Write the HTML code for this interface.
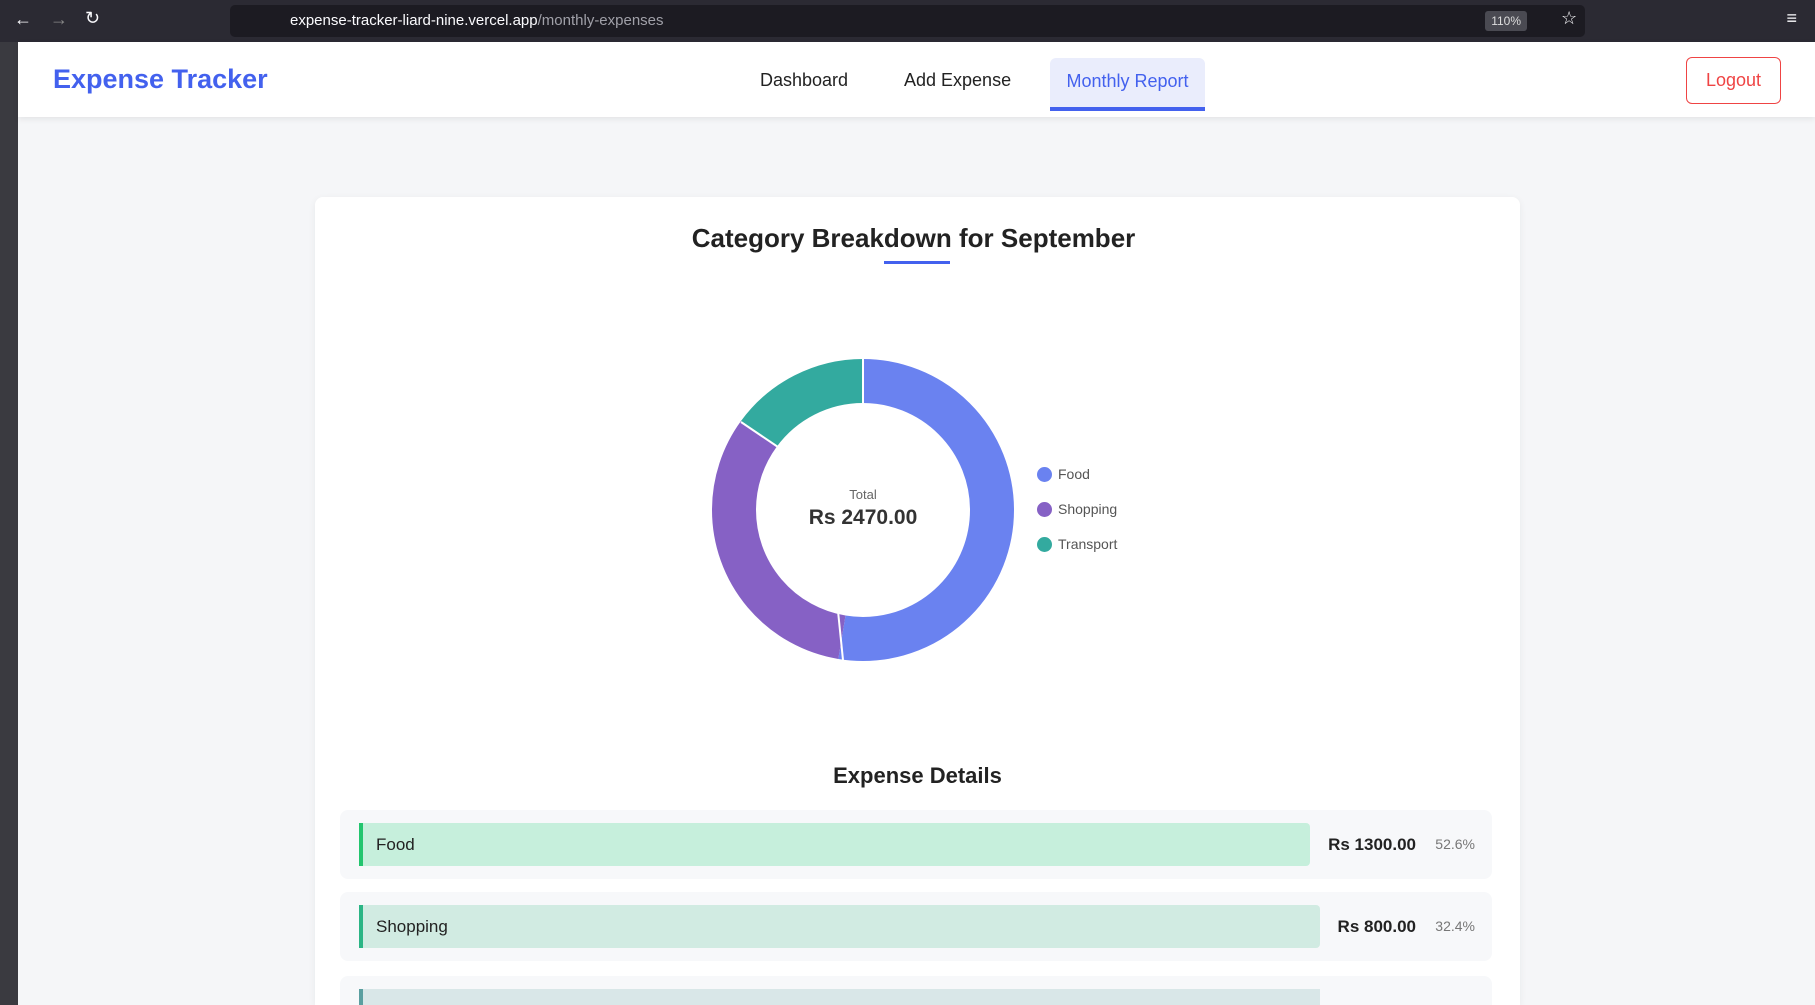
<!DOCTYPE html>
<html style="width:1815px;height:1005px;overflow:hidden"><head><meta charset="utf-8"><style>
*{margin:0;padding:0;box-sizing:border-box}
body{width:1815px;height:1005px;overflow:hidden;font-family:"Liberation Sans",sans-serif;background:#f5f6f8;position:relative}
.tb{position:absolute;left:0;top:0;width:1815px;height:42px;background:#2b2a33}
.url{position:absolute;left:230px;top:5px;width:1355px;height:32px;background:#1c1b22;border-radius:5px;color:#fbfbfe;font-size:15px;line-height:32px;padding-left:60px}
.url span{color:#a0a0a8}
.zoom{position:absolute;right:58px;top:6px;background:#4a4a52;color:#ddd;font-size:12px;padding:3px 6px;border-radius:3px;line-height:14px}
.side{position:absolute;left:0;top:42px;width:18px;height:963px;background:#3a3a40}
.hdr{position:absolute;left:18px;top:42px;width:1797px;height:75px;background:#fff;box-shadow:0 2px 6px rgba(0,0,0,.08)}
.logo{position:absolute;left:35px;top:22px;font-size:27px;font-weight:bold;color:#4361ee}
.nav{position:absolute;top:28px;font-size:18px;color:#222}
.act{position:absolute;left:1032px;top:16px;width:155px;height:53px;background:#eaedfc;border-radius:6px 6px 0 0;color:#4361ee;font-size:18px;text-align:center;line-height:46px;border-bottom:4px solid #4361ee}
.lo{position:absolute;left:1668px;top:15px;width:95px;height:47px;border:1px solid #ef4444;border-radius:6px;color:#ef4444;font-size:18px;text-align:center;line-height:45px}
.card{position:absolute;left:315px;top:197px;width:1205px;height:808px;background:#fff;border-radius:8px 8px 0 0;box-shadow:0 2px 8px rgba(0,0,0,.06)}
h1{position:absolute;left:0;width:100%;top:223px;text-align:center;font-size:26px;color:#222;padding-left:12px}
.ul{position:absolute;left:884px;top:261px;width:66px;height:3px;background:#4361ee}
.leg{position:absolute;left:1037px;font-size:14px;color:#555}
.leg i{display:inline-block;width:15px;height:15px;border-radius:50%;vertical-align:-3px;margin-right:6px}
h2{position:absolute;left:0;width:100%;top:763px;text-align:center;font-size:22px;color:#222;padding-left:20px}
.row{position:absolute;left:340px;width:1152px;height:69px;background:#f7f8fa;border-radius:8px}
.bar{position:absolute;left:19px;top:13px;height:43px;border-radius:0 4px 4px 0;font-size:17px;color:#222;line-height:43px;padding-left:13px}
.amt{position:absolute;top:0;line-height:69px;font-size:17px;font-weight:bold;color:#222}
.pct{position:absolute;right:17px;line-height:69px;font-size:14px;color:#777}
</style></head><body>
<div class="tb"><span style="position:absolute;left:14px;top:9px;color:#fbfbfe;font-size:18px">←</span><span style="position:absolute;left:50px;top:9px;color:#888;font-size:18px">→</span><span style="position:absolute;left:85px;top:8px;color:#fbfbfe;font-size:18px">↻</span>
<div class="url">expense-tracker-liard-nine.vercel.app<span>/monthly-expenses</span><div class="zoom">110%</div></div>
<span style="position:absolute;left:1561px;top:8px;color:#fbfbfe;font-size:18px">☆</span>
<span style="position:absolute;right:18px;top:8px;color:#fbfbfe;font-size:18px">≡</span></div>
<div class="side"></div>
<div class="hdr"><div class="logo">Expense Tracker</div>
<div class="nav" style="left:742px">Dashboard</div><div class="nav" style="left:886px">Add Expense</div>
<div class="act">Monthly Report</div><div class="lo">Logout</div></div>
<div class="card"></div>
<h1>Category Breakdown for September</h1><div class="ul"></div>
<svg style="position:absolute;left:0;top:0" width="1815" height="1005">
<g transform="rotate(-90 863 510)" fill="none" stroke-width="44">
<circle cx="863" cy="510" r="129" stroke="#6a82f0" stroke-dasharray="426.3 810.5"/>
<circle cx="863" cy="510" r="129" stroke="#8661c5" stroke-dasharray="0 426.3 262.6 810.5"/>
<circle cx="863" cy="510" r="129" stroke="#33aa9f" stroke-dasharray="0 688.9 121.6 810.5"/>
</g>
<g stroke="#fff" stroke-width="2"><line x1="863" y1="359" x2="863" y2="403"/><line x1="838" y1="611" x2="843" y2="660"/><line x1="741" y1="422" x2="778" y2="447"/></g>
<text x="863" y="499" text-anchor="middle" font-family="Liberation Sans" font-size="13" fill="#666">Total</text>
<text x="863" y="524" text-anchor="middle" font-family="Liberation Sans" font-size="21" font-weight="bold" fill="#333">Rs 2470.00</text>
</svg>
<div class="leg" style="top:466px"><i style="background:#6a82f0"></i>Food</div>
<div class="leg" style="top:501px"><i style="background:#8661c5"></i>Shopping</div>
<div class="leg" style="top:536px"><i style="background:#33aa9f"></i>Transport</div>
<h2>Expense Details</h2>
<div class="row" style="top:810px"><div class="bar" style="width:951px;background:#c6efdc;border-left:4px solid #22c56e">Food</div><div class="amt" style="right:76px">Rs 1300.00</div><div class="pct">52.6%</div></div>
<div class="row" style="top:892px"><div class="bar" style="width:961px;background:#d1ebe2;border-left:4px solid #2bb585">Shopping</div><div class="amt" style="right:76px">Rs 800.00</div><div class="pct">32.4%</div></div>
<div class="row" style="top:976px;height:29px;border-radius:8px 8px 0 0"><div class="bar" style="width:961px;height:16px;background:#d9e7e8;border-left:4px solid #5a9fa0;border-radius:0"></div></div>
</body></html>
